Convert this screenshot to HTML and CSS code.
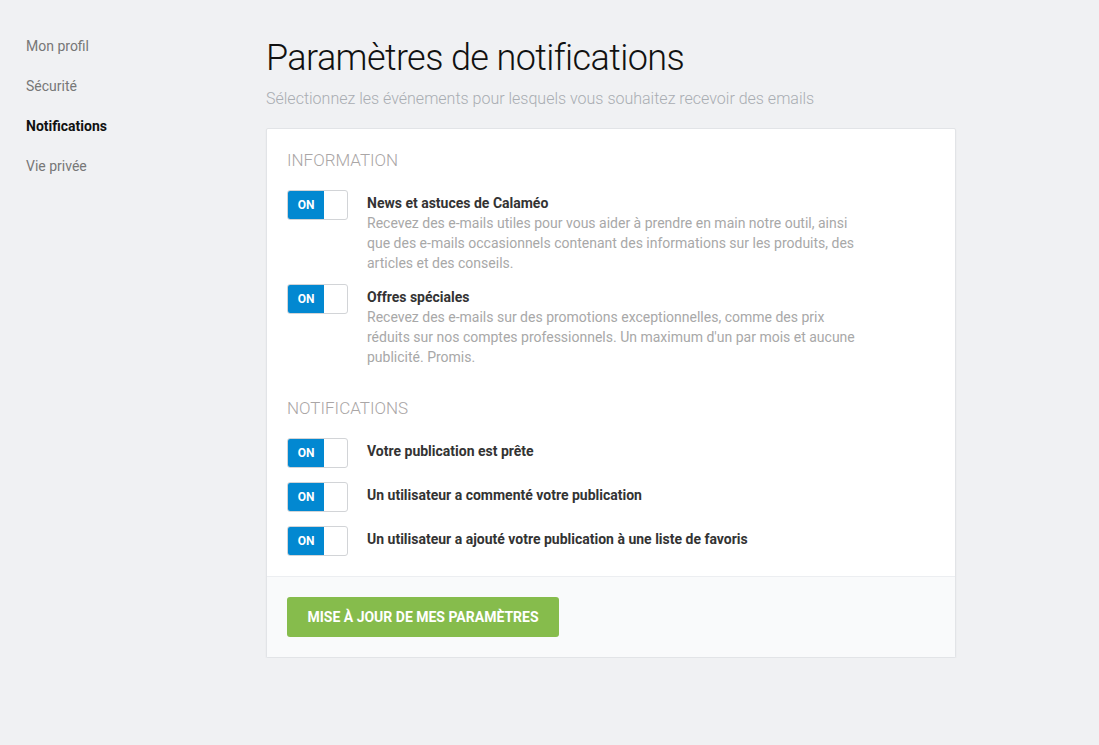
FILE: index.html
```html
<!DOCTYPE html>
<html lang="fr">
<head>
<meta charset="utf-8">
<title>Paramètres de notifications</title>
<link rel="stylesheet" href="styles.css">
</head>
<body>
<div class="layout">
  <nav class="sidebar">
    <a class="nav-item" href="#">Mon profil</a>
    <a class="nav-item" href="#">Sécurité</a>
    <a class="nav-item active" href="#">Notifications</a>
    <a class="nav-item" href="#">Vie privée</a>
  </nav>
  <main class="main">
    <h1 class="page-title">Paramètres de notifications</h1>
    <p class="page-subtitle">Sélectionnez les événements pour lesquels vous souhaitez recevoir des emails</p>
    <section class="card">
      <div class="card-body">
        <h2 class="section-title">Information</h2>
        <div class="rows">
          <div class="row">
            <div class="toggle"><span class="toggle-on">ON</span><span class="toggle-off"></span></div>
            <div class="row-text">
              <div class="row-title">News et astuces de Calaméo</div>
              <div class="row-desc">Recevez des e-mails utiles pour vous aider à prendre en main notre outil, ainsi que des e-mails occasionnels contenant des informations sur les produits, des articles et des conseils.</div>
            </div>
          </div>
          <div class="row">
            <div class="toggle"><span class="toggle-on">ON</span><span class="toggle-off"></span></div>
            <div class="row-text">
              <div class="row-title">Offres spéciales</div>
              <div class="row-desc">Recevez des e-mails sur des promotions exceptionnelles, comme des prix réduits sur nos comptes professionnels. Un maximum d'un par mois et aucune publicité. Promis.</div>
            </div>
          </div>
        </div>
        <h2 class="section-title second">Notifications</h2>
        <div class="rows">
          <div class="row">
            <div class="toggle"><span class="toggle-on">ON</span><span class="toggle-off"></span></div>
            <div class="row-text"><div class="row-title">Votre publication est prête</div></div>
          </div>
          <div class="row">
            <div class="toggle"><span class="toggle-on">ON</span><span class="toggle-off"></span></div>
            <div class="row-text"><div class="row-title">Un utilisateur a commenté votre publication</div></div>
          </div>
          <div class="row">
            <div class="toggle"><span class="toggle-on">ON</span><span class="toggle-off"></span></div>
            <div class="row-text"><div class="row-title">Un utilisateur a ajouté votre publication à une liste de favoris</div></div>
          </div>
        </div>
      </div>
      <div class="card-footer">
        <button class="btn-save" type="button">Mise à jour de mes paramètres</button>
      </div>
    </section>
  </main>
</div>
</body>
</html>
```

FILE: styles.css
```css
* { box-sizing: border-box; }
html, body {
  margin: 0;
  padding: 0;
  background: #f0f1f3;
  font-family: Roboto, "Liberation Sans", Arial, sans-serif;
  color: #333;
}
.layout {
  display: flex;
  align-items: flex-start;
  padding: 0 26px;
}
.sidebar {
  width: 240px;
  flex: none;
  display: flex;
  flex-direction: column;
  padding-top: 26px;
}
.nav-item {
  display: block;
  height: 40px;
  line-height: 40px;
  font-size: 14px;
  color: #777;
  text-decoration: none;
}
.nav-item.active {
  color: #111;
  font-weight: 700;
}
.main {
  width: 690px;
  padding-top: 34px;
}
.page-title {
  margin: 0;
  font-size: 36px;
  font-weight: 300;
  line-height: 48px;
  color: #111;
  letter-spacing: -0.6px;
}
.page-subtitle {
  margin: 7px 0 0;
  font-size: 16px;
  font-weight: 300;
  line-height: 20px;
  color: #a9adb2;
}
.card {
  margin-top: 19px;
  background: #fff;
  border: 1px solid #e2e4e7;
  border-radius: 2px;
  box-shadow: 0 1px 2px rgba(0,0,0,0.06);
}
.card-body {
  padding: 21px 20px 20px;
}
.section-title {
  margin: 0 0 20px;
  font-size: 17px;
  line-height: 20px;
  font-weight: 300;
  text-transform: uppercase;
  color: #aaa6a6;
}
.section-title.second {
  margin-top: 34px;
}
.rows {
  display: flex;
  flex-direction: column;
  gap: 14px;
}
.row {
  display: flex;
  align-items: flex-start;
}
.toggle {
  flex: none;
  width: 61px;
  height: 30px;
  display: flex;
  border: 1px solid #d2d4d7;
  border-radius: 3px;
  overflow: hidden;
  background: #fff;
}
.toggle-on {
  width: 36px;
  background: #0288d1;
  color: #fff;
  font-size: 12px;
  font-weight: 700;
  display: flex;
  align-items: center;
  justify-content: center;
}
.toggle-off {
  flex: 1;
}
.row-text {
  margin-left: 19px;
  padding-top: 3px;
  margin-bottom: -3px;
  max-width: 490px;
}
.row-title {
  font-size: 14px;
  line-height: 20px;
  font-weight: 700;
  color: #333;
}
.row-desc {
  font-size: 14px;
  line-height: 20px;
  color: #a8a8a8;
}
.card-footer {
  border-top: 1px solid #eceef1;
  background: #f9fafb;
  padding: 20px;
}
.btn-save {
  display: block;
  width: 272px;
  height: 40px;
  border: none;
  border-radius: 3px;
  background: #86bc4c;
  color: #fff;
  font-family: Roboto, "Liberation Sans", Arial, sans-serif;
  font-size: 14px;
  font-weight: 700;
  text-transform: uppercase;
  letter-spacing: 0;
  cursor: pointer;
}
```
